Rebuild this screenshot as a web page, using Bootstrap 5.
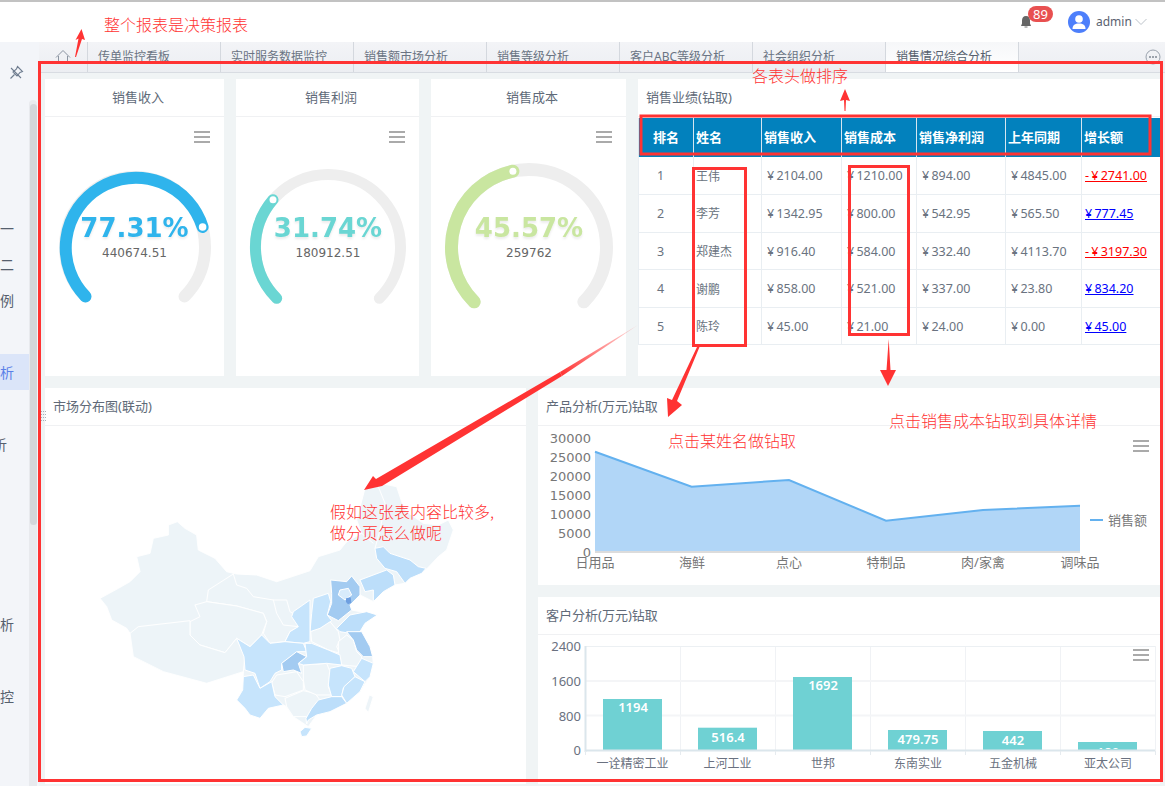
<!DOCTYPE html>
<html lang="zh-CN">
<head>
<meta charset="utf-8">
<title>销售情况综合分析</title>
<link href="https://cdn.jsdelivr.net/npm/bootstrap@5.3.0/dist/css/bootstrap.min.css" rel="stylesheet">
<style>
html,body{height:786px;overflow:hidden}
body{position:relative;background:#f0f4f5;font-family:"Noto Sans","Noto Sans CJK SC",sans-serif;font-size:13px;color:#606a78}
.top-head{height:42px;border-top:2px solid #c2c2c2;background:#fff;padding-right:18px}
.bell-wrap{position:relative;width:20px;height:20px;margin-right:32px;margin-top:-1px}
.bell-badge{position:absolute;left:12px;top:-6px;background:#e85050;font-size:13px;font-weight:400;line-height:16px;padding:0 5px;height:16px}
.avatar{width:22px;height:22px;border-radius:50%;background:#4d7ffb;overflow:hidden}
.who{font-size:12px;color:#5a6270;margin:0 7px 0 6px;width:32px;white-space:nowrap}
.shell{height:744px;overflow:hidden}
.side{width:39px;background:#f3f5f9;flex:none}
.side-col{width:29px;flex:none}
.pin-row{height:168px;padding:20px 0 0 9px}
.side-item{height:36px;padding-right:15px;overflow:hidden;font-size:14px;color:#56606e;white-space:nowrap}
.side-item.on{background:#dbe5f9;color:#5a80e8}
.side-item.deep{padding-right:22px}
.track{width:8px;flex:none;margin-top:58px;background:#e8eaee;border-radius:4px 4px 0 0;padding:4px 0 0 1px}
.thumb{height:421px;background:#d3d6db;border-radius:4px}
.main-col{min-width:0;flex:1}
.tab-bar{height:31px;background:linear-gradient(#f3f4f7,#eceef2);border-bottom:1px solid #d8dce2;flex-wrap:nowrap}
.tab-bar .nav-link{width:133px;height:30px;padding:0 0 0 10px;display:flex;align-items:center;border-right:1px solid #d4d8de;color:#6a7483;font-size:12px;white-space:nowrap;border-radius:0}
.tab-bar .nav-link.home{width:49px;padding:0;justify-content:center}
.tab-bar .nav-link.active{background:linear-gradient(#f6f7f9,#fff);color:#56606e}
.tab-more{margin:0 4px 0 auto;display:flex;align-items:center}
.board{gap:12px;padding:6px 0 0 6px}
.board-row{gap:12px}
.row-a{height:297px}
.row-b{height:396px}
.w-rev{width:179px}
.w-pro{width:183px}
.w-cost{width:195px}
.w-sales{width:522px}
.w-map{width:481px}
.w-right{width:622px;gap:12px}
.h-prod{height:197px}
.h-cust{height:187px}
.panel{background:#fff;border:0;border-radius:0;min-width:0;overflow:hidden}
.panel .card-header{height:38px;flex:none;padding:0 8px;display:flex;align-items:center;background:#fff;border-bottom:1px solid #f0f1f3;border-radius:0;font-size:13px;color:#606a78}
.panel .card-header.mid{justify-content:center;padding-left:15px}
.panel svg{display:block}
.sales-wrap{padding-top:1px}
.sales-table{table-layout:fixed;width:522px;margin:0;font-size:12.500px;--bs-table-border-color:#e9eef2;border-collapse:collapse}
.sales-table th{background:#0281bd;color:#fff;height:39px;padding:0 0 0 2px;font-size:13px;font-weight:700;vertical-align:middle;border:1px solid #d5e6f0;border-width:0 1px}
.sales-table td{height:37.600px;padding:2px 0 0 5px;vertical-align:middle;border-width:0 1px 1px;white-space:nowrap;color:#6a7380;word-spacing:-1px}
.sales-table th.ctr{text-align:center;padding-left:0}
.sales-table td.ctr{text-align:center;padding:2px 11px 0 0}
.sales-table .who-cell{padding-left:2px;font-size:12px}
.sales-table .grow{padding-left:3px}
.minus{color:#f00;text-decoration:underline}
.plus{color:#00f;text-decoration:underline}
.svg-txt{font-family:"Noto Sans","Noto Sans CJK SC",sans-serif;font-size:13px}
.txt-sm{font-size:12px}
.dj{font-family:"DejaVu Sans",sans-serif}
.pct{font-family:"DejaVu Sans",sans-serif;font-size:26px;font-weight:700;text-anchor:middle;filter:drop-shadow(0 2px 1px rgba(0,0,0,.08))}
.sub{font-family:"DejaVu Sans",sans-serif;font-size:12px;fill:#666;text-anchor:middle}
.over{position:absolute;left:0;top:0;pointer-events:none}
.note{font-family:"Noto Sans CJK SC",sans-serif;font-size:16px;font-weight:300;fill:#f33}
</style>
</head>
<body>
<header class="top-head d-flex align-items-center justify-content-end">
  <div class="bell-wrap">
    <svg width="20" height="20" viewBox="0 0 20 20"><path d="M10 4C7.400 4 6 6 6 8.500v3L5 14h10l-1-2.500v-3C14 6 12.600 4 10 4z" fill="#666"/><rect x="8.500" y="14.500" width="3" height="1" fill="#777"/></svg>
    <span class="badge rounded-pill bell-badge">89</span>
  </div>
  <div class="avatar"><svg width="22" height="22" viewBox="0 0 22 22"><circle cx="11" cy="8" r="3.800" fill="#fff"/><path d="M4.500 18c0-4 2.500-5.500 6.500-5.500s6.500 1.500 6.500 5.500z" fill="#fff"/></svg></div>
  <span class="who">admin</span>
  <svg width="12" height="8" viewBox="0 0 12 8"><path d="M.5 1 6 6.500 11.500 1" fill="none" stroke="#bcc2c9" stroke-width="1"/></svg>
</header>
<div class="shell d-flex">
  <aside class="side d-flex">
    <div class="side-col">
      <div class="pin-row"><svg width="15" height="15" viewBox="0 0 15 15"><g fill="none" stroke="#6f7d90" stroke-width="1.100"><path d="M8.500 1.500 13.500 6.500 11 7.500 8 11 4 7 7.500 4z"/><path d="M5.500 9.500 1.500 13.500"/><path d="M2 3 12 13"/></g></svg></div>
      <div class="side-item d-flex align-items-center justify-content-end">报表一</div>
      <div class="side-item d-flex align-items-center justify-content-end">报表二</div>
      <div class="side-item d-flex align-items-center justify-content-end">案例</div>
      <div class="side-item"></div>
      <div class="side-item on d-flex align-items-center justify-content-end">分析</div>
      <div class="side-item"></div>
      <div class="side-item deep d-flex align-items-center justify-content-end">分析</div>
      <div class="side-item"></div><div class="side-item"></div><div class="side-item"></div><div class="side-item"></div>
      <div class="side-item d-flex align-items-center justify-content-end">分析</div>
      <div class="side-item"></div>
      <div class="side-item d-flex align-items-center justify-content-end">监控</div>
    </div>
    <div class="track"><div class="thumb"></div></div>
  </aside>
  <div class="main-col">
    <nav class="nav tab-bar">
      <a class="nav-link home" href="#"><svg width="16" height="16" viewBox="0 0 16 16"><path d="M1 8.500 8 1.500l7 7M3.500 7v7.500h9V7" fill="none" stroke="#8b94a1" stroke-width="1"/></svg></a>
      <a class="nav-link" href="#">传单监控看板</a>
      <a class="nav-link" href="#">实时服务数据监控</a>
      <a class="nav-link" href="#">销售额市场分析</a>
      <a class="nav-link" href="#">销售等级分析</a>
      <a class="nav-link" href="#">客户ABC等级分析</a>
      <a class="nav-link" href="#">社会组织分析</a>
      <a class="nav-link active" href="#">销售情况综合分析</a>
      <span class="tab-more"><svg width="16" height="16" viewBox="0 0 16 16"><circle cx="8" cy="8" r="7" fill="none" stroke="#9aa2ad"/><circle cx="5" cy="8" r="1" fill="#7f8793"/><circle cx="8" cy="8" r="1" fill="#7f8793"/><circle cx="11" cy="8" r="1" fill="#7f8793"/></svg></span>
    </nav>
    <div class="board d-flex flex-column">
      <div class="board-row row-a d-flex">
      <section class="card panel w-rev">
        <div class="card-header mid">销售收入</div>
        <svg width="179" height="259" viewBox="45 117 179 259">
          <rect x="194" y="131" width="16" height="2" fill="#aaa"/><rect x="194" y="136" width="16" height="2" fill="#aaa"/><rect x="194" y="141" width="16" height="2" fill="#aaa"/>
          <path d="M85.500 296.500A70 70 0 1 1 184.500 296.500" fill="none" stroke="#eee" stroke-width="12" stroke-linecap="round"/>
          <path d="M85.500 296.500A70 70 0 1 1 202.600 227" fill="none" stroke="#2fb4ec" stroke-width="12" stroke-linecap="round"/>
          <circle cx="202.600" cy="227" r="3.800" fill="#fff"/>
          <text class="pct" x="134.500" y="237" fill="#2fb4ec">77.31%</text>
          <text class="sub" x="134.500" y="257">440674.51</text>
        </svg>
      </section>
      <section class="card panel w-pro">
        <div class="card-header mid">销售利润</div>
        <svg width="183" height="259" viewBox="236 117 183 259">
          <rect x="389" y="131" width="16" height="2" fill="#aaa"/><rect x="389" y="136" width="16" height="2" fill="#aaa"/><rect x="389" y="141" width="16" height="2" fill="#aaa"/>
          <path d="M276.700 298.300A72.500 72.500 0 1 1 379.300 298.300" fill="none" stroke="#eee" stroke-width="11" stroke-linecap="round"/>
          <path d="M276.700 298.300A72.500 72.500 0 0 1 273 199.700" fill="none" stroke="#6ad6d3" stroke-width="11" stroke-linecap="round"/>
          <circle cx="273" cy="199.700" r="3.500" fill="#fff"/>
          <text class="pct" x="328" y="237" fill="#6ad6d3">31.74%</text>
          <text class="sub" x="328" y="257">180912.51</text>
        </svg>
      </section>
      <section class="card panel w-cost">
        <div class="card-header mid">销售成本</div>
        <svg width="195" height="259" viewBox="431 117 195 259">
          <rect x="596" y="131" width="16" height="2" fill="#aaa"/><rect x="596" y="136" width="16" height="2" fill="#aaa"/><rect x="596" y="141" width="16" height="2" fill="#aaa"/>
          <path d="M474.200 301.800A77.500 77.500 0 1 1 583.800 301.800" fill="none" stroke="#eee" stroke-width="13" stroke-linecap="round"/>
          <path d="M474.200 301.800A77.500 77.500 0 0 1 512.900 171.200" fill="none" stroke="#c9e6a0" stroke-width="13" stroke-linecap="round"/>
          <circle cx="512.900" cy="171.200" r="3.500" fill="#fff"/>
          <text class="pct" x="529" y="237" fill="#c9e6a0">45.57%</text>
          <text class="sub" x="529" y="257">259762</text>
        </svg>
      </section>
      <section class="card panel w-sales">
        <div class="card-header">销售业绩(钻取)</div>
        <div class="sales-wrap">
          <table class="table sales-table">
            <colgroup><col width="55"><col width="68"><col width="80"><col width="75"><col width="89"><col width="76"><col width="79"></colgroup>
            <thead><tr><th class="ctr">排名</th><th>姓名</th><th>销售收入</th><th>销售成本</th><th>销售净利润</th><th>上年同期</th><th>增长额</th></tr></thead>
            <tbody>
              <tr><td class="ctr">1</td><td class="who-cell">王伟</td><td>¥ 2104.00</td><td>¥ 1210.00</td><td>¥ 894.00</td><td>¥ 4845.00</td><td class="grow"><a class="minus" href="#">- ¥ 2741.00</a></td></tr>
              <tr><td class="ctr">2</td><td class="who-cell">李芳</td><td>¥ 1342.95</td><td>¥ 800.00</td><td>¥ 542.95</td><td>¥ 565.50</td><td class="grow"><a class="plus" href="#">¥ 777.45</a></td></tr>
              <tr><td class="ctr">3</td><td class="who-cell">郑建杰</td><td>¥ 916.40</td><td>¥ 584.00</td><td>¥ 332.40</td><td>¥ 4113.70</td><td class="grow"><a class="minus" href="#">- ¥ 3197.30</a></td></tr>
              <tr><td class="ctr">4</td><td class="who-cell">谢鹏</td><td>¥ 858.00</td><td>¥ 521.00</td><td>¥ 337.00</td><td>¥ 23.80</td><td class="grow"><a class="plus" href="#">¥ 834.20</a></td></tr>
              <tr><td class="ctr">5</td><td class="who-cell">陈玲</td><td>¥ 45.00</td><td>¥ 21.00</td><td>¥ 24.00</td><td>¥ 0.00</td><td class="grow"><a class="plus" href="#">¥ 45.00</a></td></tr>
            </tbody>
          </table>
        </div>
      </section>
      </div>
      <div class="board-row row-b d-flex">
      <section class="card panel w-map">
        <div class="card-header">市场分布图(联动)</div>
        <svg width="481" height="358" viewBox="45 426 481 358">
          <g transform="translate(90 500) scale(.33333)" stroke="#fff" stroke-width="3" stroke-linejoin="round" fill="#edf4f8">
            <path d="M30 295 85 265 120 245 150 215 140 170 180 160 190 115 235 105 235 75 262 65 285 85 320 105 325 150 375 175 410 215 440 222 500 225 560 245 600 232 660 212 685 170 750 150 770 125 815 100 800 60 825 -35 870 -50 920 -40 935 5 950 35 1000 70 1045 75 1075 60 1090 90 1070 150 1045 170 1012 205 995 220 960 235 945 250 915 255 880 275 850 305 810 285 780 315 785 330 862 345 825 370 810 395 840 440 848 470 850 490 840 530 810 575 770 610 720 635 680 645 655 680 610 650 590 620 580 615 535 625 510 655 480 645 465 625 440 600 458 570 460 515 350 550 220 515 130 470 120 400 110 385 65 360 50 320z"/>
            <path d="M865 -40 885 10 880 40 870 90 855 145M815 100 850 130" fill="none"/>
            <path d="M430 222 355 270 350 305 440 318 520 340 530 365 520 400 540 430 585 425 600 395 628 380 605 350 550 300 490 290 470 265 440 255z"/>
            <path d="M315 315 350 305 440 318 520 340 530 365 515 405 480 440 440 415 405 458 330 435 300 405 300 365 330 350z"/>
            <path d="M120 400 145 380 300 362 300 405 330 435 405 458 440 415 465 470 460 515 350 550 220 515 130 470z"/>
            <path d="M550 300 590 300 600 335 625 350 625 380 580 375 560 340z"/>
            <path d="M545 548 560 525 620 515 640 545 640 570 585 590 555 585z"/>
            <path d="M585 595 640 572 675 580 690 600 670 650 610 650 590 620z"/>
            <path d="M640 495 710 490 720 515 715 560 725 585 680 585 645 570 640 540z"/>
            <path d="M662 395 720 365 745 395 750 420 740 440 750 460 715 450 665 425z"/>
            <path d="M745 425 770 405 790 420 800 455 815 470 810 500 755 495 745 460z"/>
            <path d="M838 585 850 590 835 638 825 625z"/>
            <g fill="#c6e4fc">
              <path d="M670 295 715 280 722 305 712 345 725 362 690 385 660 395 665 340z"/>
              <path d="M610 335 660 300 660 345 660 425 640 430 585 425 600 395 625 380 605 350z"/>
              <path d="M440 415 480 440 515 405 540 430 585 425 640 430 650 455 622 455 575 490 575 510 555 520 540 545 510 565 495 520 465 510 462 470z"/>
              <path d="M460 530 490 525 510 565 545 545 555 590 580 615 535 625 510 655 480 645 465 625 440 600 458 570z"/>
              <path d="M645 430 665 430 715 450 750 465 755 495 710 490 640 495 625 490 650 470z"/>
              <path d="M815 475 850 490 840 530 825 545 790 515z"/>
              <path d="M720 505 755 497 785 505 795 530 760 565 755 590 725 590 715 555z"/>
              <path d="M795 530 825 545 810 575 770 610 755 585 762 560z"/>
              <path d="M630 695 645 682 665 685 650 708 635 710z"/>
            </g>
            <g fill="#bcdefa">
              <path d="M855 145 880 140 900 160 960 180 985 200 1008 205 995 220 960 235 945 250 920 215 885 205 860 175z"/>
              <path d="M810 240 890 210 910 225 915 255 880 275 850 305 850 270 825 275z"/>
              <path d="M740 385 780 345 830 335 862 345 825 370 810 395 780 400 750 395z"/>
              <path d="M685 600 725 590 755 590 770 610 720 635 680 645 655 660 650 672 648 655 665 625z"/>
            </g>
            <g fill="#a3cbf1">
              <path d="M722 240 770 245 785 228 810 260 810 285 780 315 785 330 745 362 712 345 725 310 725 280z"/>
              <path d="M770 395 815 395 840 440 848 470 820 470 800 450 790 420z"/>
              <path d="M620 455 650 470 625 490 635 520 610 510 580 515 575 490z"/>
            </g>
            <path d="M750 270 775 265 785 285 765 300 745 285z" fill="#d8ebfb"/>
            <path d="M768 295 782 292 784 308 774 313 768 306z" fill="#6e9fe0" stroke="none"/>
          </g>
        </svg>
      </section>
      <div class="w-right d-flex flex-column">
        <section class="card panel h-prod">
          <div class="card-header">产品分析(万元)钻取</div>
          <svg width="622" height="159" viewBox="538 426 622 159">
            <rect x="1133" y="440" width="16" height="2" fill="#aaa"/><rect x="1133" y="445" width="16" height="2" fill="#aaa"/><rect x="1133" y="450" width="16" height="2" fill="#aaa"/>
            <path d="M595 451.700 691.600 486.700 789 480 886 520.700 983 510 1080 505.700V551.700H595z" fill="#b1d6f7"/>
            <path d="M595 451.700 691.600 486.700 789 480 886 520.700 983 510 1080 505.700" fill="none" stroke="#63b1ef" stroke-width="2"/>
            <rect x="595" y="551" width="485" height="2" fill="#dcdcdc"/>
            <g class="dj" fill="#777" font-size="13" text-anchor="end">
              <text x="591" y="443">30000</text><text x="591" y="462">25000</text><text x="591" y="481">20000</text><text x="591" y="500">15000</text><text x="591" y="519">10000</text><text x="591" y="538">5000</text><text x="591" y="557">0</text>
            </g>
            <g class="svg-txt" fill="#777" text-anchor="middle">
              <text x="595" y="567">日用品</text><text x="692" y="567">海鲜</text><text x="789" y="567">点心</text><text x="886" y="567">特制品</text><text x="983" y="567">肉/家禽</text><text x="1080" y="567">调味品</text>
            </g>
            <rect x="1090" y="519" width="13" height="2" fill="#63b1ef"/>
            <text class="svg-txt" x="1108" y="524.500" fill="#777">销售额</text>
          </svg>
        </section>
        <section class="card panel h-cust">
          <div class="card-header">客户分析(万元)钻取</div>
          <svg width="622" height="149" viewBox="538 635 622 149">
            <defs><clipPath id="plotclip"><rect x="585" y="640" width="572" height="109"/></clipPath></defs>
            <g stroke="#f0f2f5" fill="none">
              <path d="M680.500 646V755M775.500 646V755M870.500 646V755M965.500 646V755M1060.500 646V755M1155.500 646V755"/>
              <path d="M585 646.500H1155" stroke="#ecf0f3"/>
              <path d="M585 681H1155M585 715.500H1155" stroke-width="2" stroke="#f4f5f7"/>
            </g>
            <rect x="1133" y="649" width="16" height="2" fill="#aaa"/><rect x="1133" y="654" width="16" height="2" fill="#aaa"/><rect x="1133" y="659" width="16" height="2" fill="#aaa"/>
            <g fill="#6fd1d3">
              <rect x="603" y="699" width="59" height="51"/><rect x="698" y="727.700" width="59" height="22.300"/><rect x="793" y="677" width="59" height="73"/><rect x="888" y="730" width="59" height="20"/><rect x="983" y="731" width="59" height="19"/><rect x="1078" y="742" width="59" height="8"/>
            </g>
            <g class="svg-txt" clip-path="url(#plotclip)" fill="#fff" font-weight="600" text-anchor="middle">
              <text x="633" y="712">1194</text><text x="728" y="742">516.4</text><text x="823" y="690">1692</text><text x="918" y="744">479.75</text><text x="1013" y="745">442</text><text x="1108" y="757">180</text>
            </g>
            <path d="M585.500 646V752M585 750.500H1155" stroke="#dbe6ec" stroke-width="2" fill="none"/>
            <path d="M585.500 751V755M680.500 751V755M775.500 751V755M870.500 751V755M965.500 751V755M1060.500 751V755M1155.500 751V755" stroke="#e6ebef" fill="none"/>
            <g class="svg-txt" fill="#6a7180" text-anchor="end">
              <text x="581" y="650.500">2400</text><text x="581" y="685.500">1600</text><text x="581" y="720.500">800</text><text x="581" y="754.500">0</text>
            </g>
            <g class="svg-txt txt-sm" fill="#6a7180" text-anchor="middle">
              <text x="632.500" y="768">一诠精密工业</text><text x="727.500" y="768">上河工业</text><text x="823" y="768">世邦</text><text x="918" y="768">东南实业</text><text x="1013" y="768">五金机械</text><text x="1108" y="768">亚太公司</text>
            </g>
          </svg>
        </section>
      </div>
      </div>
    </div>
  </div>
</div>
<svg class="over" width="1165" height="786" viewBox="0 0 1165 786">
  <defs><linearGradient id="fade" x1="638" y1="325" x2="560" y2="375" gradientUnits="userSpaceOnUse"><stop offset="0" stop-color="#f33" stop-opacity=".15"/><stop offset="1" stop-color="#f33"/></linearGradient></defs>
  <g fill="#aab2bb"><rect x="41" y="411" width="1" height="1"/><rect x="43" y="411" width="1" height="1"/><rect x="45" y="411" width="1" height="1"/><rect x="41" y="414" width="1" height="1"/><rect x="43" y="414" width="1" height="1"/><rect x="45" y="414" width="1" height="1"/><rect x="41" y="417" width="1" height="1"/><rect x="43" y="417" width="1" height="1"/><rect x="45" y="417" width="1" height="1"/><rect x="41" y="420" width="1" height="1"/><rect x="43" y="420" width="1" height="1"/><rect x="45" y="420" width="1" height="1"/></g>
  <g fill="none" stroke="#f33" stroke-width="3">
    <rect x="39.500" y="62.500" width="1122" height="718"/>
    <rect x="641" y="116" width="509" height="38"/>
    <rect x="693.500" y="168.500" width="52" height="177"/>
    <rect x="849.500" y="166.500" width="59" height="168"/>
  </g>
  <g fill="#f33">
    <path d="M81.500 29 85 40 82 39 76 57 75 57 78.500 38.500 75.500 40z"/>
    <path d="M845 89 850 101 846 100 845.500 111 844.500 111 844 100 840 101z"/>
    <path d="M888.700 339 890.500 370 896 370 888 386 880 370 886.500 370z"/>
    <path d="M699.500 347 677 401 682 405 668 417 667 398 672 400 697 347z"/>
    <path d="M382 486 364 490 373 476 376 479 560 372 562 376z"/>
  </g>
  <path d="M638 325 560 372 562 376z" fill="url(#fade)"/>
  <text class="note" x="104" y="31">整个报表是决策报表</text>
  <text class="note" x="752" y="82">各表头做排序</text>
  <text class="note" x="889" y="427">点击销售成本钻取到具体详情</text>
  <text class="note" x="668" y="447">点击某姓名做钻取</text>
  <text class="note" x="330" y="518">假如这张表内容比较多,</text>
  <text class="note" x="330" y="539">做分页怎么做呢</text>
</svg>
<script src="https://cdn.jsdelivr.net/npm/bootstrap@5.3.0/dist/js/bootstrap.bundle.min.js"></script>
</body>
</html>
